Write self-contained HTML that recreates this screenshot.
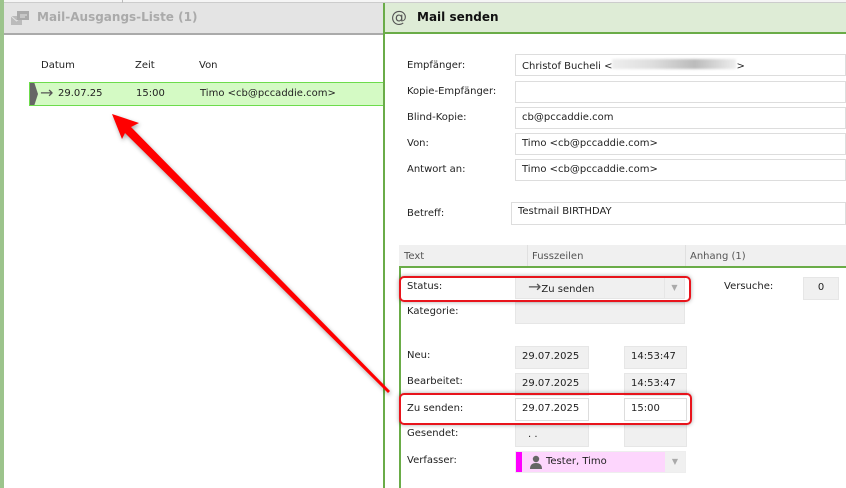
<!DOCTYPE html>
<html><head><meta charset="utf-8"><style>
*{margin:0;padding:0;box-sizing:border-box}
body{width:846px;height:488px;overflow:hidden;background:#fff;font-family:"DejaVu Sans","Liberation Sans",sans-serif;font-size:10px;color:#222;position:relative}
.a{position:absolute}
.lbl{position:absolute;left:407px}
.in{position:absolute;border:1px solid #ddd;background:#fff;padding:4px 6px;white-space:nowrap;overflow:hidden}
.g{background:#f0f0f0;border-color:#e6e6e6}
.rb{position:absolute;border:2px solid #e8141c;border-radius:5px;box-shadow:0 0 4px rgba(0,0,0,.35)}
</style></head><body>
<div class="a" style="left:0;top:0;width:4px;height:488px;background:#9cc48c"></div>
<div class="a" style="left:4px;top:0;width:842px;height:3px;background:#f5f5f5;border-bottom:1px solid #ccc"></div>
<div class="a" style="left:122px;top:0;width:1px;height:3px;background:#bbb"></div>
<div class="a" style="left:4px;top:3px;width:379px;height:32px;background:#e4e4e4;border-bottom:2px solid #aaa"></div>
<svg class="a" style="left:11px;top:10px" width="20" height="16" viewBox="0 0 20 16"><rect x="0" y="6" width="11" height="9" fill="#bbb"/><path d="M0 6 L5.5 11 L11 6" stroke="#e4e4e4" fill="none"/><rect x="6" y="1" width="12" height="9" fill="#aaa"/><path d="M9 5h7M9 7h5" stroke="#e4e4e4"/></svg>
<div class="a" style="left:37px;top:10px;font-size:12px;font-weight:bold;color:#aaa">Mail-Ausgangs-Liste (1)</div>
<div class="a" style="left:41px;top:60px">Datum</div>
<div class="a" style="left:135px;top:60px">Zeit</div>
<div class="a" style="left:199px;top:60px">Von</div>
<div class="a" style="left:29px;top:82px;width:355px;height:24px;background:#d4fac4;border:1px solid #6ddc4c"></div>
<div class="a" style="left:30px;top:83px;width:8px;height:22px;background:#666;clip-path:polygon(0 0,55% 0,100% 50%,55% 100%,0 100%)"></div>
<div class="a" style="left:40px;top:83px;font-size:16px;color:#555">→</div>
<div class="a" style="left:58px;top:88px">29.07.25</div>
<div class="a" style="left:136px;top:88px">15:00</div>
<div class="a" style="left:200px;top:88px">Timo &lt;cb@pccaddie.com&gt;</div>
<div class="a" style="left:383px;top:3px;width:463px;height:485px;border-left:2px solid #6aac48"></div>
<div class="a" style="left:385px;top:3px;width:461px;height:31px;background:#deecd6;border-bottom:2px solid #6aac48"></div>
<div class="a" style="left:391px;top:7px;font-size:16px;color:#555">@</div>
<div class="a" style="left:417px;top:10px;font-size:12px;font-weight:bold;color:#111">Mail senden</div>
<div class="lbl" style="top:60px">Empfänger:</div>
<div class="in" style="left:515px;top:54px;width:331px;height:22px">Christof Bucheli &lt;<span style="display:inline-block;width:124px;height:10px;background:linear-gradient(90deg,#eee,#ddd,#bbb,#eee);filter:blur(1px)"></span>&gt;</div>
<div class="lbl" style="top:86px">Kopie-Empfänger:</div>
<div class="in" style="left:515px;top:81px;width:331px;height:22px"></div>
<div class="lbl" style="top:112px">Blind-Kopie:</div>
<div class="in" style="left:515px;top:107px;width:331px;height:22px">cb@pccaddie.com</div>
<div class="lbl" style="top:138px">Von:</div>
<div class="in" style="left:515px;top:133px;width:331px;height:22px">Timo &lt;cb@pccaddie.com&gt;</div>
<div class="lbl" style="top:164px">Antwort an:</div>
<div class="in" style="left:515px;top:159px;width:331px;height:22px">Timo &lt;cb@pccaddie.com&gt;</div>
<div class="lbl" style="top:208px">Betreff:</div>
<div class="in" style="left:511px;top:202px;width:335px;height:23px;padding-top:3px">Testmail BIRTHDAY</div>
<div class="a" style="left:399px;top:245px;width:447px;height:21px;background:#f0f0f0"></div>
<div class="a" style="left:527px;top:245px;width:1px;height:21px;background:#e0e0e0"></div>
<div class="a" style="left:685px;top:245px;width:1px;height:21px;background:#e0e0e0"></div>
<div class="a" style="left:404px;top:251px;color:#555">Text</div>
<div class="a" style="left:532px;top:251px;color:#555">Fusszeilen</div>
<div class="a" style="left:690px;top:251px;color:#555">Anhang (1)</div>
<div class="a" style="left:399px;top:266px;width:447px;height:222px;border-top:2px solid #6aac48;border-left:2px solid #6aac48"></div>
<div class="lbl" style="top:281px">Status:</div>
<div class="in g" style="left:515px;top:277px;width:170px;height:22px;padding-left:12px;padding-top:2px"><span style="color:#555;font-size:16px;line-height:14px">→</span>Zu senden<span style="position:absolute;right:0;top:0;width:20px;height:20px;border-left:1px solid #e6e6e6;color:#aaa;font-size:8px;text-align:center;line-height:20px">▼</span></div>
<div class="a" style="left:724px;top:281px">Versuche:</div>
<div class="in g" style="left:803px;top:277px;width:36px;height:23px;text-align:center">0</div>
<div class="lbl" style="top:306px">Kategorie:</div>
<div class="in g" style="left:515px;top:302px;width:170px;height:22px"></div>
<div class="lbl" style="top:350px">Neu:</div>
<div class="in g" style="left:515px;top:346px;width:74px;height:23px">29.07.2025</div>
<div class="in g" style="left:624px;top:346px;width:63px;height:23px">14:53:47</div>
<div class="lbl" style="top:376px">Bearbeitet:</div>
<div class="in g" style="left:515px;top:373px;width:74px;height:23px">29.07.2025</div>
<div class="in g" style="left:624px;top:373px;width:63px;height:23px">14:53:47</div>
<div class="lbl" style="top:403px">Zu senden:</div>
<div class="in" style="left:515px;top:398px;width:74px;height:23px">29.07.2025</div>
<div class="in" style="left:624px;top:398px;width:63px;height:23px">15:00</div>
<div class="lbl" style="top:428px">Gesendet:</div>
<div class="in g" style="left:515px;top:424px;width:74px;height:23px;padding-left:12px">. .</div>
<div class="in g" style="left:624px;top:424px;width:63px;height:23px"></div>
<div class="lbl" style="top:455px">Verfasser:</div>
<div class="in" style="left:515px;top:451px;width:171px;height:22px;background:#fdd6fd;border-color:#eee;padding-left:30px">Tester, Timo<span style="position:absolute;left:0;top:0;width:6px;height:20px;background:#f0f"></span><span style="position:absolute;right:0;top:0;width:20px;height:20px;background:#f0f0f0;color:#aaa;font-size:8px;text-align:center;line-height:20px">▼</span><svg style="position:absolute;left:13px;top:3px" width="14" height="14" viewBox="0 0 14 14"><circle cx="7" cy="4" r="3.2" fill="#666"/><path d="M1 14 Q1 8 7 8 Q13 8 13 14Z" fill="#666"/></svg></div>
<div class="rb" style="left:399px;top:276px;width:292px;height:26px"></div>
<div class="rb" style="left:399px;top:393px;width:293px;height:32px"></div>
<svg class="a" style="left:0;top:0;filter:drop-shadow(1px 2px 2px rgba(0,0,0,.35))" width="846" height="488"><polygon points="112,114 139,123 131,127 390,391 388,393 125,133 122,139" fill="#f00"/></svg>
</body></html>
